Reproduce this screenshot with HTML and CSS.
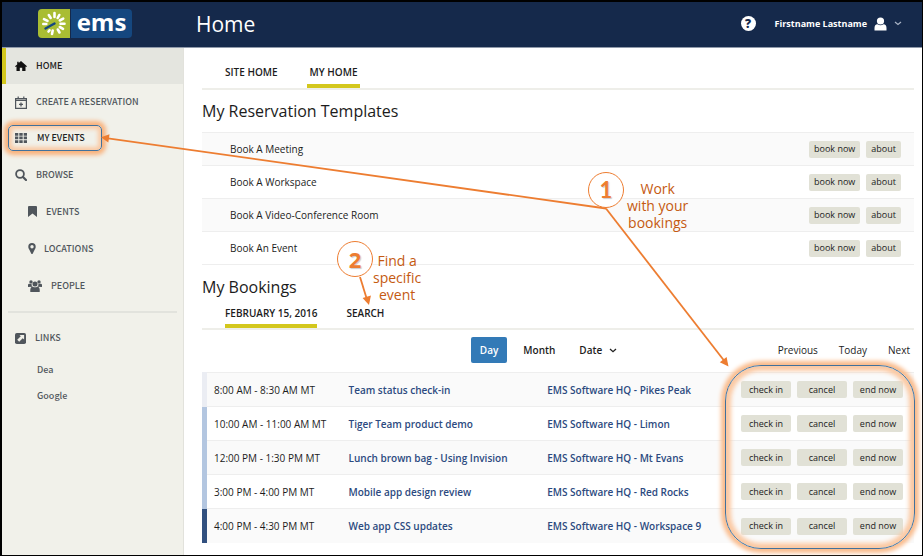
FILE: index.html
```html
<!DOCTYPE html>
<html lang="en">
<head>
<meta charset="utf-8">
<title>EMS Home</title>
<link rel="stylesheet" href="styles.css">
</head>
<body>
<div class="app">
  <header class="topbar">
    <a class="logo" href="#" aria-label="ems">
      <span class="logo-mark">
        <svg viewBox="0 0 32 29" width="32" height="29" aria-hidden="true">
          <path d="M16.500 4v4M21.300 6l-1.600 3M25.200 9.700l-3.400 1.800M26.500 14.800h-4M25 19.800l-3.200-1.800M21.500 23.500l-1.700-3M14 25l.7-3.500M10.500 22.500l1-1.200M6 10.200l3.500 1.700M10.800 6l1.900 3M5.300 15h3" fill="none" stroke="#fff" stroke-width="2.600" stroke-linecap="round"/>
          <path d="M7.500 19.500l9-5" stroke="#15477f" stroke-width="2.400" stroke-linecap="round"/>
        </svg>
      </span>
      <span class="logo-text">ems</span>
    </a>
    <h1 class="page-title">Home</h1>
    <button class="help" aria-label="Help">?</button>
    <button class="user">
      <span>Firstname Lastname</span>
      <svg viewBox="0 0 13 14" width="13" height="14" aria-hidden="true"><circle cx="6.500" cy="4" r="3.600" fill="#fff"/><path d="M0.500 13.500v-2.500q0-3.500 3-3.800q3 2 6 0q3 .3 3 3.800v2.500z" fill="#fff"/></svg>
      <svg class="caret" viewBox="0 0 8 5" width="8" height="5" aria-hidden="true"><path d="M1 1l3 2.500L7 1" fill="none" stroke="#aab4c6" stroke-width="1.200"/></svg>
    </button>
  </header>

  <div class="body">
    <nav class="sidebar">
      <a class="item active" href="#">
        <svg viewBox="0 0 12 10" width="12" height="10" aria-hidden="true"><path d="M6 0l6 5.300-.8.700L10.500 5.500V10H7.200V6.800H4.800V10H1.500V5.500L.8 6 0 5.300 2.200 3.400V.8h1.500v1.300z" fill="#111"/></svg>
        <span>HOME</span>
      </a>
      <a class="item" href="#">
        <svg viewBox="0 0 12 13" width="12" height="13" aria-hidden="true"><path d="M.6 2.600h10.800v9.800H.6zM.6 4.300h10.800M3.200.5v2.500M8.800.5v2.500" fill="none" stroke="#50565c" stroke-width="1.200"/><path d="M6 6.400v4M4 8.400h4" stroke="#50565c" stroke-width="1.300"/></svg>
        <span>CREATE A RESERVATION</span>
      </a>
      <a class="item spotlight" href="#">
        <svg viewBox="0 0 12 10" width="12" height="10" aria-hidden="true"><path d="M0 0h3.300v2.700H0zM4.300 0h3.400v2.700H4.300zM8.700 0H12v2.700H8.700zM0 3.600h3.300v2.700H0zM4.300 3.600h3.400v2.700H4.300zM8.700 3.600H12v2.700H8.700zM0 7.200h3.300V10H0zM4.300 7.200h3.400V10H4.300zM8.700 7.200H12V10H8.700z" fill="#50565c"/></svg>
        <span>MY EVENTS</span>
      </a>
      <a class="item tall" href="#">
        <svg viewBox="0 0 12 12" width="12" height="12" aria-hidden="true"><circle cx="5" cy="5" r="3.900" fill="none" stroke="#50565c" stroke-width="1.800"/><path d="M8 8l3 3" stroke="#50565c" stroke-width="2.200" stroke-linecap="round"/></svg>
        <span>BROWSE</span>
      </a>
      <a class="item tall sub" href="#">
        <svg viewBox="0 0 9 11" width="9" height="11" aria-hidden="true"><path d="M0 1q0-1 1-1h7q1 0 1 1v10L4.500 7.500 0 11z" fill="#50565c"/></svg>
        <span>EVENTS</span>
      </a>
      <a class="item tall sub pin" href="#">
        <svg viewBox="0 0 8 11" width="8" height="11" aria-hidden="true"><path d="M4 0a3.700 3.700 0 0 1 3.700 3.700c0 1.300-.6 2.300-1.200 3.300L4.800 10.500q-.8 1-1.600 0L1.500 7C.9 6 .3 5 .3 3.700A3.700 3.700 0 0 1 4 0zm0 2a1.700 1.700 0 1 0 0 3.400A1.700 1.700 0 0 0 4 2z" fill="#50565c" fill-rule="evenodd"/></svg>
        <span>LOCATIONS</span>
      </a>
      <a class="item tall sub" href="#">
        <svg viewBox="0 0 14 12" width="14" height="12" aria-hidden="true"><g fill="#50565c"><circle cx="3" cy="1.900" r="1.700"/><circle cx="11" cy="1.900" r="1.700"/><circle cx="7" cy="4" r="2.500"/><path d="M0 7V5q0-1.300 1.300-1.300h2.300q-.3 2 .9 3zM14 7V5q0-1.300-1.300-1.300h-2.300q.3 2-.9 3zM2.300 12q-.5-5.200 2.500-5.300 2.200 1.300 4.400 0 3 .1 2.500 5.300z"/></g></svg>
        <span>PEOPLE</span>
      </a>
      <hr>
      <div class="item links">
        <svg viewBox="0 0 11 11" width="11" height="11" aria-hidden="true"><rect width="11" height="11" rx="1.800" fill="#50565c"/><path d="M4.500 2h4.600v4.600L7.700 5.200 4.200 8.700l-2-2 3.600-3.500z" fill="#f0f0e9"/></svg>
        <span>LINKS</span>
      </div>
      <a class="link" href="#">Dea</a>
      <a class="link" href="#">Google</a>
    </nav>

    <main class="main">
      <div class="tabs">
        <a class="tab" href="#">SITE HOME</a>
        <a class="tab current" href="#">MY HOME</a>
      </div>
      <h2>My Reservation Templates</h2>
      <table class="templates">
        <tr><td>Book A Meeting</td><td class="actions"><button>book now</button><button>about</button></td></tr>
        <tr><td>Book A Workspace</td><td class="actions"><button>book now</button><button>about</button></td></tr>
        <tr><td>Book A Video-Conference Room</td><td class="actions"><button>book now</button><button>about</button></td></tr>
        <tr><td>Book An Event</td><td class="actions"><button>book now</button><button>about</button></td></tr>
      </table>
      <h2>My Bookings</h2>
      <div class="tabs lower">
        <a class="tab date current" href="#">FEBRUARY 15, 2016</a>
        <a class="tab" href="#">SEARCH</a>
      </div>
      <div class="toolbar">
        <div class="views">
          <button class="day">Day</button>
          <button>Month</button>
          <button>Date <svg viewBox="0 0 8 5" width="8" height="5" aria-hidden="true"><path d="M1 1l3 2.700L7 1" fill="none" stroke="#222" stroke-width="1.300"/></svg></button>
        </div>
        <div class="pager"><button>Previous</button><button>Today</button><button>Next</button></div>
      </div>
      <div class="bookings-wrap">
        <table class="bookings">
          <colgroup><col class="c-time"><col class="c-name"><col class="c-place"><col></colgroup>
          <tr class="past"><td>8:00 AM - 8:30 AM MT</td><td><a href="#">Team status check-in</a></td><td><a href="#">EMS Software HQ - Pikes Peak</a></td><td class="actions"><button>check in</button><button>cancel</button><button>end now</button></td></tr>
          <tr><td>10:00 AM - 11:00 AM MT</td><td><a href="#">Tiger Team product demo</a></td><td><a href="#">EMS Software HQ - Limon</a></td><td class="actions"><button>check in</button><button>cancel</button><button>end now</button></td></tr>
          <tr><td>12:00 PM - 1:30 PM MT</td><td><a href="#">Lunch brown bag - Using Invision</a></td><td><a href="#">EMS Software HQ - Mt Evans</a></td><td class="actions"><button>check in</button><button>cancel</button><button>end now</button></td></tr>
          <tr><td>3:00 PM - 4:00 PM MT</td><td><a href="#">Mobile app design review</a></td><td><a href="#">EMS Software HQ - Red Rocks</a></td><td class="actions"><button>check in</button><button>cancel</button><button>end now</button></td></tr>
          <tr class="next"><td>4:00 PM - 4:30 PM MT</td><td><a href="#">Web app CSS updates</a></td><td><a href="#">EMS Software HQ - Workspace 9</a></td><td class="actions"><button>check in</button><button>cancel</button><button>end now</button></td></tr>
        </table>
        <div class="ring"></div>
      </div>
    </main>
  </div>

  <svg class="arrows" viewBox="0 0 923 556" width="923" height="556" aria-hidden="true">
    <g stroke="#ed7d31" stroke-width="1.800" fill="none">
      <path d="M606 208.500L108 138.300"/>
      <path d="M606 208.500L724 360.500"/>
      <path d="M360 277L366.500 298"/>
    </g>
    <g fill="#ed7d31">
      <path d="M101 137.300L109.500 134.200 108.300 142.600z"/>
      <path d="M728.500 366.500L719.800 362.300 726.600 357z"/>
      <path d="M369 305L362.600 298 370.900 295.500z"/>
    </g>
  </svg>
  <div class="callout one"><b class="num foot">1</b><p>Work<br>with your<br>bookings</p></div>
  <div class="callout two"><b class="num">2</b><p>Find a<br>specific<br>event</p></div>
</div>
</body>
</html>
```
FILE: styles.css
```css
* { box-sizing: border-box; }

body {
  margin: 0;
  font: 10px/16px "Open Sans", sans-serif;
  color: #1c1c1c;
  background: #fff;
}

a { color: inherit; text-decoration: none; }

button {
  font: inherit;
  color: inherit;
  border: 0;
  padding: 0;
  background: none;
}

svg { display: block; flex: none; }

.app {
  position: relative;
  display: flex;
  flex-direction: column;
  min-height: 100vh;
  border: solid #000;
  border-width: 2px 1px 1px 2px;
}

.topbar {
  display: flex;
  align-items: center;
  height: 46px;
  padding: 0 20px 2px 36px;
  background: #15294b;
  border-bottom: 1px solid #8f99aa;
  color: #fff;
}

.logo { display: flex; gap: 1px; width: 158px; }

.logo-mark {
  background: #a9bd33;
  border-radius: 4px 0 0 4px;
}

.logo-text {
  width: 61px;
  height: 29px;
  background: #15477f;
  border-radius: 0 4px 4px 0;
  font-size: 24px;
  line-height: 26px;
  font-weight: 700;
  text-align: center;
}

.page-title {
  flex: 1;
  margin: 0;
  font-size: 21px;
  line-height: 30px;
  font-weight: 400;
}

.help {
  width: 15px;
  height: 15px;
  margin-right: 19px;
  border-radius: 50%;
  background: #fff;
  color: #15294b;
  font-size: 12px;
  line-height: 15px;
  font-weight: 800;
}

.user {
  display: flex;
  align-items: center;
  gap: 7px;
  font-size: 9px;
  font-weight: 700;
}

.body { display: flex; flex: 1; }

.sidebar {
  flex: none;
  width: 182px;
  background: #f1f1ea;
  border-right: 1px solid #e2e2dc;
  font-family: "Noto Sans CJK SC", sans-serif;
  font-size: 9px;
  font-weight: 500;
  color: #50565c;
}

.item {
  display: flex;
  align-items: center;
  gap: 9px;
  height: 36px;
  padding-left: 13px;
}

.item.active {
  padding-left: 9px;
  border-left: 4px solid #d3c71d;
  background: #e4e5df;
  color: #222;
}

.item.tall { height: 37px; }
.item.sub { padding-left: 26px; }
.item.pin { gap: 8px; }

.item.spotlight {
  width: 94px;
  height: 26px;
  margin: 5px 6px;
  padding-left: 6px;
  gap: 10px;
  border: 1px solid #41719c;
  border-radius: 5px;
  color: #222;
  box-shadow: 0 0 4px 4px #f9b27c, inset 0 0 4px 3px #fac9a3;
}

.sidebar hr {
  height: 2px;
  margin: 7px 6px 8px;
  border: 0;
  background: #e2e3dd;
}

.item.links { height: 34px; }

.link {
  display: block;
  padding-left: 35px;
  line-height: 26px;
}

.links + .link { margin-top: 2px; }

.main {
  flex: 1;
  padding: 12px 8px 12px 18px;
}

.tabs {
  display: flex;
  gap: 26px;
  padding-left: 20px;
  border-bottom: 2px solid #eeeee9;
  font-weight: 600;
}

.tab {
  height: 28px;
  padding: 4px 3px 0;
  border-bottom: 4px solid transparent;
}

.tab.date { padding: 4px 0 0; }
.tab.current { border-color: #d3c71d; }
.lower .tab { height: 27px; }
.tabs.lower { padding-left: 23px; }

h2 {
  margin: 0;
  font-size: 16px;
  line-height: 42px;
  font-weight: 400;
}

table {
  width: 100%;
  border-collapse: collapse;
}

td { padding: 0; border-top: 1px solid #eeeeee; }
tr:nth-child(odd) { background: #fafafa; }

.templates { border-bottom: 1px solid #eeeeee; }
.templates tr { height: 33px; }
.templates td:first-child { padding-left: 28px; }
.templates .actions { padding-right: 13px; }
.templates button { padding: 0 5px; }

.templates + h2 { line-height: 44px; margin-bottom: -8px; }

.actions { text-align: right; white-space: nowrap; }

.actions button {
  height: 17px;
  margin-left: 6px;
  font-size: 9px;
  line-height: 16px;
  border-radius: 2px;
  background: #e1e1d6;
  vertical-align: middle;
}

.toolbar {
  display: grid;
  grid-template-columns: 1fr auto 1fr;
  align-items: center;
  padding: 7px 4px 9px 0;
}

.views {
  grid-column: 2;
  display: flex;
  align-items: center;
  gap: 16px;
  margin-right: 16px;
  font-weight: 600;
}

.views button { display: flex; align-items: center; gap: 7px; padding-right: 8px; }

.views .day {
  padding: 5px 9px;
  border-radius: 2px;
  background: #337ab7;
  color: #fff;
}

.pager { display: flex; justify-content: flex-end; gap: 21px; }

.bookings-wrap { position: relative; }

.bookings { table-layout: fixed; }
.bookings tr { height: 34px; }
.c-time { width: 144px; }
.c-name { width: 28%; }
.c-place { width: 25%; }

.bookings td:first-child {
  padding-left: 7px;
  border-left: 5px solid #b3c6e0;
}

.bookings .past td:first-child { border-left-color: #ebedf3; }
.bookings .next td:first-child { border-left-color: #31507f; }
.bookings a { color: #2c4a80; font-weight: 600; }
.bookings .actions { padding-right: 11px; }
.bookings button { width: 50px; }

.ring {
  position: absolute;
  top: -7px;
  right: -1px;
  bottom: -6px;
  width: 190px;
  border: 1px solid #41719c;
  border-radius: 36px;
  box-shadow: 0 0 4px 4px #fabb8b, inset 0 0 4px 5px #fbc9a3;
  pointer-events: none;
}

.arrows {
  position: absolute;
  top: -2px;
  left: -2px;
  pointer-events: none;
}

.callout {
  position: absolute;
  display: flex;
  color: #c55a11;
  font-size: 14px;
  line-height: 17px;
  text-align: center;
}

.callout p { margin: 8px 0 0; }
.callout.one { left: 586px; top: 170px; gap: 3px; }
.callout.two { left: 335px; top: 239px; }
.callout.two p { margin-top: 11px; }

.num {
  width: 36px;
  height: 36px;
  border: 1px solid #ed7d31;
  border-radius: 50%;
  background: #fff;
  color: #ed7d31;
  font-size: 22px;
  line-height: 34px;
  text-shadow: 1px 1px 1px #cccccc;
}

.num.foot { font-family: Lato, sans-serif; }
```
